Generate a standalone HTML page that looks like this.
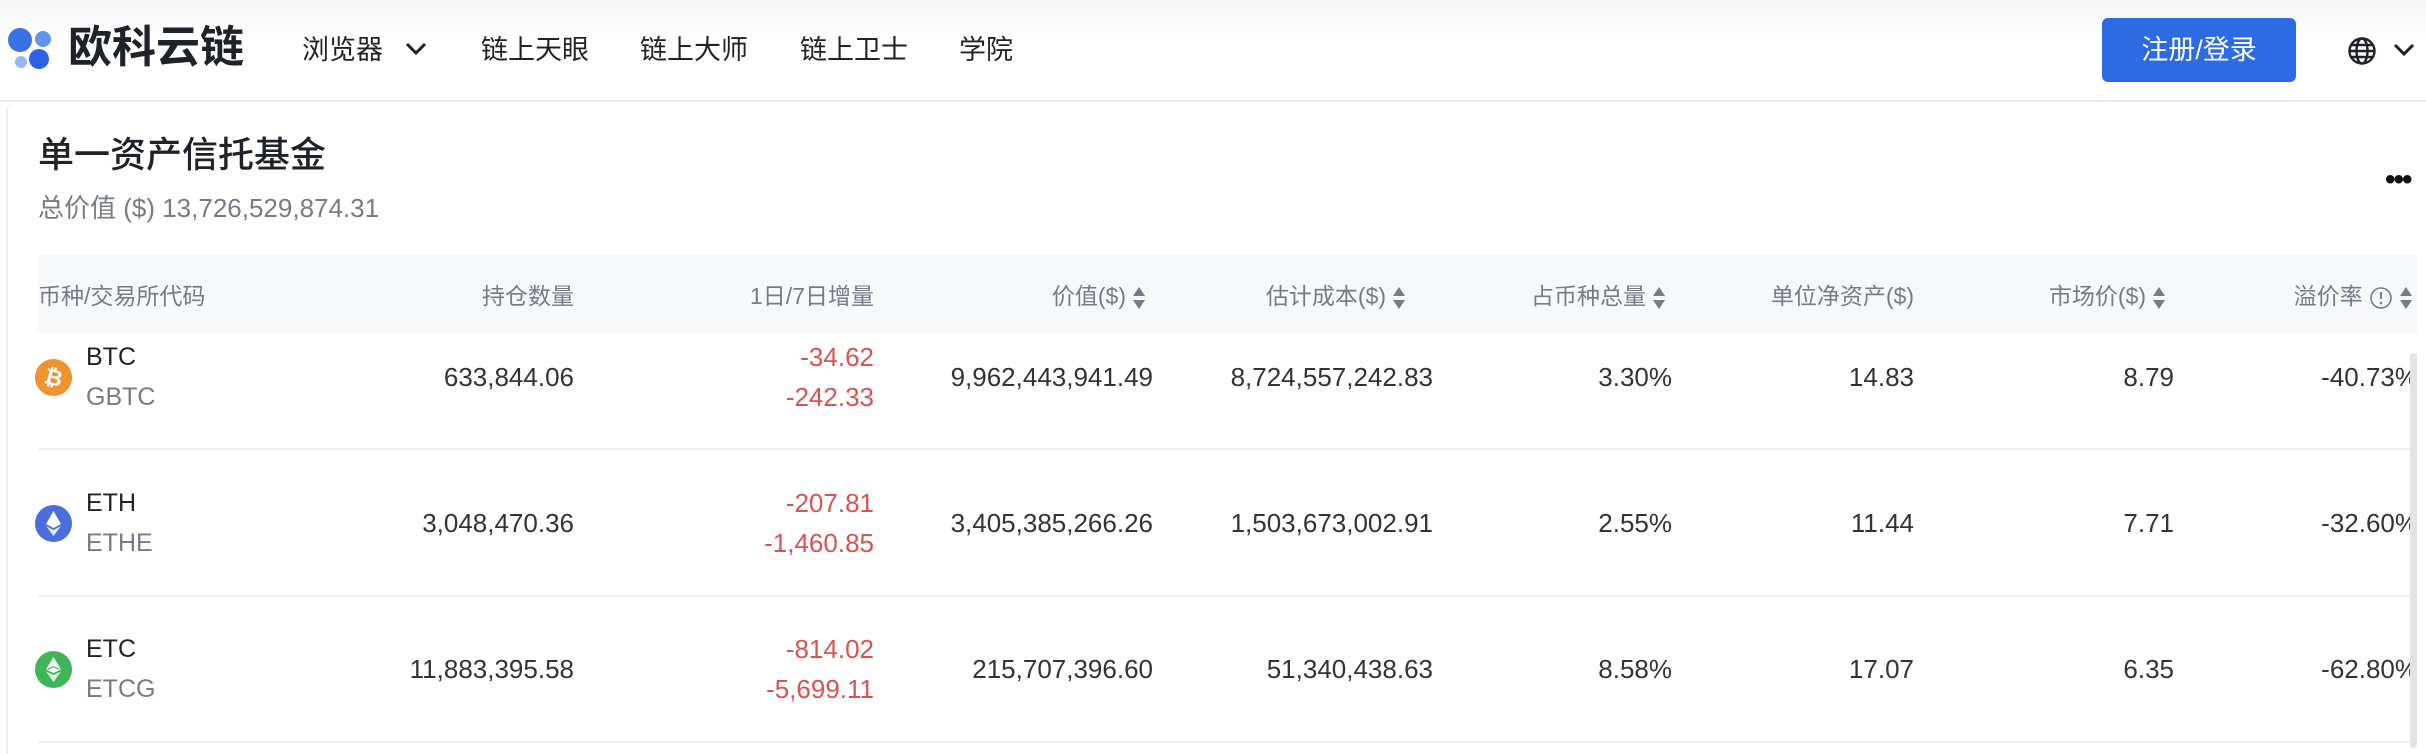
<!DOCTYPE html>
<html><head><meta charset="utf-8">
<style>
*{margin:0;padding:0;box-sizing:border-box}
body{width:2426px;height:748px;overflow:hidden;background:#fff;font-family:"Liberation Sans","Noto Sans CJK SC",sans-serif;position:relative;color:#1f2329}
.a{position:absolute;white-space:nowrap}
.nav{font-size:27px;color:#1f2329;top:32px;line-height:36px}
.r{text-align:right}
.hd{font-size:23px;color:#767b86;top:281px;line-height:30px}
.num{font-size:26px;color:#333;line-height:30px}
.red{color:#d9534f;font-size:26px;line-height:30px}
.sym{font-size:25px;color:#1f2329;line-height:30px;left:86px}
.sub{font-size:25px;color:#767b86;line-height:30px;left:86px}
.sort{display:inline-block;width:14px;height:28px;vertical-align:middle;margin-left:6px}
.line{position:absolute;left:38px;width:2372px;height:2px;background:#eef0f3}
</style></head><body>
<div class="a" style="left:0;top:0;width:2426px;height:102px;background:linear-gradient(#f4f5f6,#fff 40%);border-bottom:2px solid #e6e7ea"></div>
<svg class="a" style="left:0;top:0" width="60" height="80">
<circle cx="20" cy="40" r="12" fill="#3a72e6"/><circle cx="43" cy="39" r="8" fill="#6495ee"/>
<circle cx="21" cy="62" r="6" fill="#97b8f2"/><circle cx="39" cy="59" r="10" fill="#2b63e6"/></svg>
<div class="a" style="left:68px;top:22px;font-size:44px;font-weight:bold;line-height:52px;color:#1f2329">欧科云链</div>
<div class="a nav" style="left:302px">浏览器</div>
<svg class="a" style="left:404px;top:41px" width="24" height="16"><path d="M3 3 L12 12 L21 3" stroke="#1f2329" stroke-width="3" fill="none"/></svg>
<div class="a nav" style="left:481px">链上天眼</div>
<div class="a nav" style="left:640px">链上大师</div>
<div class="a nav" style="left:800px">链上卫士</div>
<div class="a nav" style="left:959px">学院</div>
<div class="a" style="left:2102px;top:18px;width:194px;height:64px;background:#2d6be4;border-radius:6px;color:#fff;font-size:27px;line-height:64px;text-align:center">注册/登录</div>
<svg class="a" style="left:2347px;top:36px" width="30" height="30"><g stroke="#1f2329" stroke-width="2.4" fill="none"><circle cx="15" cy="15" r="12.5"/><ellipse cx="15" cy="15" rx="5.5" ry="12.5"/><path d="M3 15H27M5 9H25M5 21H25"/></g></svg>
<svg class="a" style="left:2392px;top:42px" width="24" height="16"><path d="M3 3 L12 12 L21 3" stroke="#1f2329" stroke-width="3" fill="none"/></svg>

<div class="a" style="left:6px;top:104px;width:2420px;height:650px;border-left:2px solid #eceef1;border-radius:8px 0 0 0"></div>
<div class="a" style="left:38px;top:133px;font-size:36px;font-weight:500;line-height:44px;color:#1f2329">单一资产信托基金</div>
<div class="a" style="left:38px;top:192px;font-size:26px;color:#767b86;line-height:32px">总价值 ($) 13,726,529,874.31</div>
<div class="a" style="left:2385px;top:170px;font-size:30px;font-weight:bold;line-height:20px;color:#111;letter-spacing:-2px">•••</div>

<div class="a" style="left:38px;top:255px;width:2379px;height:78px;background:#f7f8fa"></div>
<div class="a hd" style="left:38px">币种/交易所代码</div>
<div class="a hd r" style="right:1852px">持仓数量</div>
<div class="a hd r" style="right:1552px">1日/7日增量</div>
<div class="a hd r" style="right:1280px">价值($)<svg class="sort" viewBox="0 0 14 28"><path d="M1 12L7 3L13 12Z M1 16L7 25L13 16Z" fill="#767b86"/></svg></div>
<div class="a hd r" style="right:1020px">估计成本($)<svg class="sort" viewBox="0 0 14 28"><path d="M1 12L7 3L13 12Z M1 16L7 25L13 16Z" fill="#767b86"/></svg></div>
<div class="a hd r" style="right:760px">占币种总量<svg class="sort" viewBox="0 0 14 28"><path d="M1 12L7 3L13 12Z M1 16L7 25L13 16Z" fill="#767b86"/></svg></div>
<div class="a hd r" style="right:512px">单位净资产($)</div>
<div class="a hd r" style="right:260px">市场价($)<svg class="sort" viewBox="0 0 14 28"><path d="M1 12L7 3L13 12Z M1 16L7 25L13 16Z" fill="#767b86"/></svg></div>
<div class="a hd r" style="right:13px">溢价率 <svg class="sort" style="width:24px;margin-left:0" viewBox="0 0 24 28"><circle cx="12" cy="14" r="10" stroke="#767b86" stroke-width="1.6" fill="none"/><path d="M12 8V15" stroke="#767b86" stroke-width="2"/><circle cx="12" cy="19" r="1.3" fill="#767b86"/></svg><svg class="sort" viewBox="0 0 14 28"><path d="M1 12L7 3L13 12Z M1 16L7 25L13 16Z" fill="#767b86"/></svg></div>

<div class="a" style="left:0;top:335px;width:2411px;height:413px;overflow:hidden">
<div style="position:absolute;left:0;top:-335px;width:2426px;height:748px">
<svg class="a" style="left:35px;top:359px" width="37" height="37"><circle cx="18.5" cy="18.5" r="18.5" fill="#f0932e"/><text x="18.5" y="26" font-size="22" font-weight="bold" fill="#fff" text-anchor="middle" font-family="Liberation Sans" transform="rotate(14 18.5 18.5)">₿</text></svg>
<div class="a sym" style="top:342px">BTC</div><div class="a sub" style="top:382px">GBTC</div>
<div class="a num r" style="right:1852px;top:362px">633,844.06</div>
<div class="a red r" style="right:1552px;top:342px">-34.62</div><div class="a red r" style="right:1552px;top:382px">-242.33</div>
<div class="a num r" style="right:1273px;top:362px">9,962,443,941.49</div>
<div class="a num r" style="right:993px;top:362px">8,724,557,242.83</div>
<div class="a num r" style="right:754px;top:362px">3.30%</div>
<div class="a num r" style="right:512px;top:362px">14.83</div>
<div class="a num r" style="right:252px;top:362px">8.79</div>
<div class="a num r" style="right:8px;top:362px">-40.73%</div>
<div class="line" style="top:448px"></div>
<svg class="a" style="left:35px;top:505px" width="37" height="37"><circle cx="18.5" cy="18.5" r="18.5" fill="#4a6fdc"/><path d="M18.5 6L11 19L18.5 23L26 19Z" fill="#fff"/><path d="M11 21L18.5 31L26 21L18.5 25Z" fill="#dfe6fa"/></svg>
<div class="a sym" style="top:488px">ETH</div><div class="a sub" style="top:528px">ETHE</div>
<div class="a num r" style="right:1852px;top:508px">3,048,470.36</div>
<div class="a red r" style="right:1552px;top:488px">-207.81</div><div class="a red r" style="right:1552px;top:528px">-1,460.85</div>
<div class="a num r" style="right:1273px;top:508px">3,405,385,266.26</div>
<div class="a num r" style="right:993px;top:508px">1,503,673,002.91</div>
<div class="a num r" style="right:754px;top:508px">2.55%</div>
<div class="a num r" style="right:512px;top:508px">11.44</div>
<div class="a num r" style="right:252px;top:508px">7.71</div>
<div class="a num r" style="right:8px;top:508px">-32.60%</div>
<div class="line" style="top:595px"></div>
<svg class="a" style="left:35px;top:651px" width="37" height="37"><circle cx="18.5" cy="18.5" r="18.5" fill="#3fb55a"/><path d="M18.5 6L11 18.5L18.5 22L26 18.5Z" fill="#fff"/><path d="M11 20.5L18.5 31L26 20.5L18.5 24Z" fill="#d9f3df"/><path d="M12.5 18.5L18.5 15.5L24.5 18.5" stroke="#3fb55a" stroke-width="1.2" fill="none"/></svg>
<div class="a sym" style="top:634px">ETC</div><div class="a sub" style="top:674px">ETCG</div>
<div class="a num r" style="right:1852px;top:654px">11,883,395.58</div>
<div class="a red r" style="right:1552px;top:634px">-814.02</div><div class="a red r" style="right:1552px;top:674px">-5,699.11</div>
<div class="a num r" style="right:1273px;top:654px">215,707,396.60</div>
<div class="a num r" style="right:993px;top:654px">51,340,438.63</div>
<div class="a num r" style="right:754px;top:654px">8.58%</div>
<div class="a num r" style="right:512px;top:654px">17.07</div>
<div class="a num r" style="right:252px;top:654px">6.35</div>
<div class="a num r" style="right:8px;top:654px">-62.80%</div>
<div class="line" style="top:741px"></div>
</div></div>
<div class="a" style="left:2410px;top:353px;width:7px;height:395px;background:#e2e3e6;border-radius:3px"></div>
</body></html>
